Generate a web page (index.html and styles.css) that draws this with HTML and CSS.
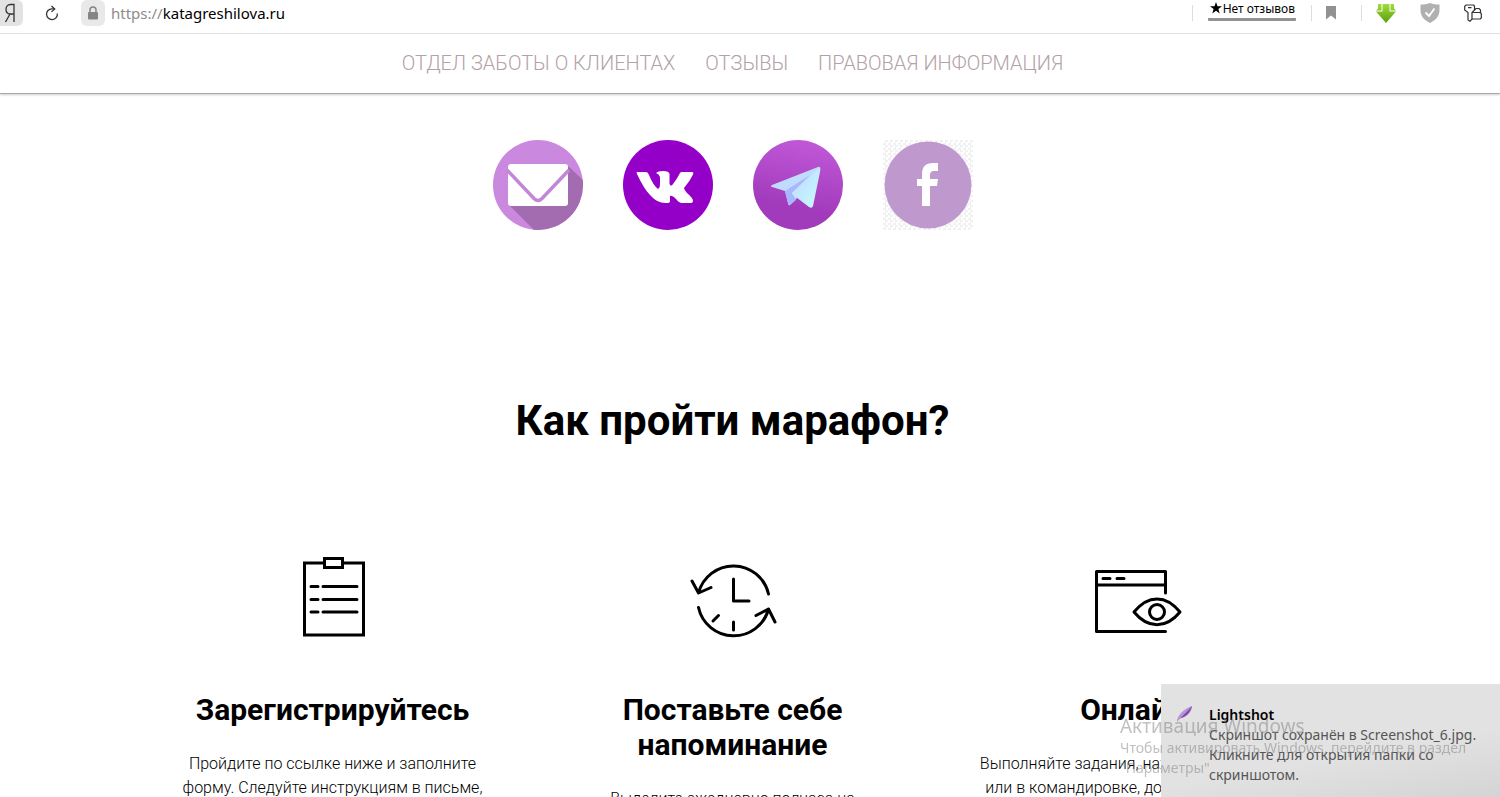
FILE: index.html
```html
<!DOCTYPE html>
<html lang="ru">
<head>
    <meta charset="UTF-8">
    <meta name="viewport" content="width=device-width, initial-scale=1.0">
    <title>katagreshilova.ru</title>
    <link rel="stylesheet" href="styles.css">
</head>
<body>
    <div class="toolbar">
        <button type="button" class="tool yandex" aria-label="Яндекс">
            <svg width="12" height="20" viewBox="0 0 12 20" fill="none" stroke="#333" stroke-width="1.3"><path d="M10 19V1.500H6.500C3.500 1.500 2 3.500 2 6.200S3.500 11 6.500 11H10M6 11L1.500 19"/></svg>
        </button>
        <button type="button" class="tool reload" aria-label="Обновить">
            <svg width="14" height="16" viewBox="0 0 14 16" fill="none" stroke="#333" stroke-width="1.3"><path d="M12.300 8.500A5.400 5.400 0 1 1 6.800 3.800H9.500"/><path d="M6.500 1L9.700 3.900L6.500 6.900"/></svg>
        </button>
        <button type="button" class="tool lock" aria-label="Защита">
            <svg width="12" height="14" viewBox="0 0 12 14"><rect x="1" y="6" width="10" height="7.500" rx="1" fill="#858585"/><path d="M3 7V4a3 3 0 0 1 6 0v3" fill="none" stroke="#858585" stroke-width="1.500"/></svg>
        </button>
        <button type="button" class="address"><span class="scheme">https://</span>katagreshilova.ru</button>
        <div class="tools-right">
            <div class="reviews-box">
                <button type="button" class="reviews"><svg width="12" height="12" viewBox="0 0 12 12"><path d="M6 0L7.500 4.200H12L8.400 6.900L9.700 11.500L6 8.700L2.300 11.500L3.600 6.900L0 4.200H4.500Z"/></svg>Нет отзывов</button>
            </div>
            <button type="button" class="tool bookmark" aria-label="Закладка">
                <svg width="10" height="14" viewBox="0 0 10 14"><path d="M0 0H10V13.500L5 9.500L0 13.500Z" fill="#929292"/></svg>
            </button>
            <button type="button" class="tool" aria-label="Загрузки">
                <svg width="20" height="20" viewBox="0 0 20 20">
                    <defs><linearGradient id="green" x2="0" y2="1"><stop offset="0" stop-color="#a4dc3c"/><stop offset="1" stop-color="#5b9e0c"/></linearGradient></defs>
                    <path d="M2 1H5.500V7.500H0L2 5.500ZM14.500 1H18V5.500L20 7.500H14.500ZM6.500 1H13.500V8.500H20L10 20L0 8.500H6.500Z" fill="url(#green)"/>
                </svg>
            </button>
            <button type="button" class="tool" aria-label="Protect">
                <svg width="20" height="20" viewBox="0 0 20 20"><path d="M10 0C13 1.500 16 1.500 19.500 1.500V7C19.500 13 16 17 10 20C4 17 .5 13 .5 7V1.500C4 1.500 7 1.500 10 0Z" fill="#b0b0b0"/><path d="M5.500 9.500L9 13L14.500 5.500" fill="none" stroke="#fff" stroke-width="1.800"/></svg>
            </button>
            <button type="button" class="tool" aria-label="Пароли">
                <svg width="18" height="18" viewBox="0 0 18 18" fill="none" stroke="#333" stroke-width="1.200"><path d="M2 1H9.500L10.500 2V6L8 8.500V15L6 17.300L4 16V8.500L.7 6V2.300Z"/><path d="M4 3.600H7.500M8 8.500H16L17.300 9.500V14L16.300 15H8M10.500 6L12 4.500H15L16.500 6V8.500"/></svg>
            </button>
        </div>
    </div>

    <div class="page">
        <nav class="menu">
            <a href="#">ОТДЕЛ ЗАБОТЫ О КЛИЕНТАХ</a>
            <a href="#">ОТЗЫВЫ</a>
            <a href="#">ПРАВОВАЯ ИНФОРМАЦИЯ</a>
        </nav>

        <div class="social">
            <a href="#" aria-label="Почта">
                <svg width="90" height="90" viewBox="0 0 90 90">
                    <defs><clipPath id="circle"><circle cx="45" cy="45" r="45"/></clipPath></defs>
                    <g clip-path="url(#circle)">
                        <rect width="90" height="90" fill="#ca88df"/>
                        <path d="M75 26L90 40V90H41L16 65Z" fill="#a46cb0"/>
                    </g>
                    <rect x="15" y="24" width="60" height="42" rx="3" fill="#fff"/>
                    <path d="M14 30L41 58.500Q45 62.500 49 58.500L76 30" fill="none" stroke="#c387d7" stroke-width="3.500"/>
                </svg>
            </a>
            <a href="#" aria-label="ВКонтакте">
                <svg width="90" height="90" viewBox="0 0 90 90">
                    <circle cx="45" cy="45" r="45" fill="#9500c9"/>
                    <path d="M14 32H23Q25 32 26 35Q30 45 35 49Q37 48 37 44V37Q36 34 33 33Q35 31 40 31Q46 31 46.500 34V44Q48 47 50 44Q54 39 57 33Q57.500 32 59 32H69Q71 32 70 34.500Q67 41 61 48Q61 50 64 53Q70 58 70 61Q70 63 67 63H59Q56 63 53 59Q49 55 47 56V61Q47 63 44 63Q35 64 27 55Q21 49 14 34Q13 32 14 32Z" fill="#fff"/>
                </svg>
            </a>
            <a href="#" aria-label="Telegram">
                <svg width="90" height="90" viewBox="0 0 90 90">
                    <defs>
                        <linearGradient id="violet" x1=".6" x2=".4" y2="1"><stop offset="0" stop-color="#c058d8"/><stop offset=".75" stop-color="#a23bbb"/></linearGradient>
                        <linearGradient id="wing" x2="1" y2="1"><stop offset="0" stop-color="#bdd9ff"/><stop offset="1" stop-color="#c9fbff"/></linearGradient>
                    </defs>
                    <circle cx="45" cy="45" r="45" fill="url(#violet)"/>
                    <path d="M19 45L65 27Q68 26 67 30L46 56L37 65Q35 66 35 63L32 51L19 47Q17 46 19 45Z" fill="#bfdcff"/>
                    <path d="M32 51L57 35L39 53L43 60L37 65Q35 66 35 63Z" fill="#a8b7fc"/>
                    <path d="M39 53L66 28Q68 28 67 32L60 66Q59 69 56 67L39 54Z" fill="url(#wing)"/>
                </svg>
            </a>
            <a href="#" aria-label="Facebook" class="facebook">
                <svg width="90" height="90" viewBox="0 0 90 90">
                    <circle cx="45" cy="45" r="43.500" fill="#bf98ce"/>
                    <path d="M39 66V46H34V39H39V34Q39 23 50 23H55V31H51Q47 31 47 35V39H55L54 46H47V66Z" fill="#fff"/>
                </svg>
            </a>
        </div>

        <h1>Как пройти марафон?</h1>

        <div class="steps">
            <div class="step">
                <svg width="100" height="100" viewBox="0 0 100 100" fill="none" stroke="#000" stroke-width="3">
                    <path d="M41 13H21.500V85H80.500V13H61"/><rect x="41.500" y="8.500" width="18" height="9"/>
                    <path d="M28 36.500H35M40 36.500H74M28 49.500H35M40 49.500H74M28 62H35M40 62H74" stroke-linecap="round"/>
                </svg>
                <h2>Зарегистрируйтесь</h2>
                <p>Пройдите по ссылке ниже и заполните форму. Следуйте инструкциям в письме, чтобы войти.</p>
            </div>
            <div class="step">
                <svg width="100" height="100" viewBox="0 0 100 100" fill="none" stroke="#000" stroke-width="3" stroke-linecap="round" stroke-linejoin="round">
                    <path d="M15.500 43A36 36 0 0 1 85.500 44M9 31L15.500 43L28 37.500M15.500 57.500A36 36 0 0 0 85.500 59M73 65.500L85.500 59L92 72"/>
                    <path d="M50.500 29V51H66M50.500 72V80M35.500 65.500L30 71"/>
                </svg>
                <h2>Поставьте себе напоминание</h2>
                <p>Выделите ежедневно полчаса на выполнение заданий.</p>
            </div>
            <div class="step">
                <svg width="100" height="100" viewBox="0 0 100 100" fill="none" stroke="#000" stroke-width="3" stroke-linecap="round" stroke-linejoin="round">
                    <path d="M82.500 43V21.500H13.500V81.500H82.500M13.500 35H82.500M20 28.500H27M34 28.500H41"/>
                    <path d="M51 62C65 44.500 83 44.500 97 62C83 79 65 79 51 62Z"/><circle cx="74" cy="62" r="7.500"/>
                </svg>
                <h2>Онлайн</h2>
                <p>Выполняйте задания, находясь в отпуске или в командировке, достаточно часа в день.</p>
            </div>
        </div>
    </div>

    <div class="notice">
        <svg width="18" height="18" viewBox="0 0 18 18"><path d="M1 17C1 10 8 4 16 1C16 7 11 12 4 13.500Z" fill="#b993d8"/><path d="M1 17C6 11 11 7 16 1C14 9 9 12 4 13.500Z" fill="#7c4da3"/></svg>
        <div>
            <strong>Lightshot</strong>
            <p>Скриншот сохранён в Screenshot_6.jpg. Кликните для открытия папки со скриншотом.</p>
        </div>
    </div>

    <div class="activation">
        <div class="activation-title">Активация Windows</div>
        <p>Чтобы активировать Windows, перейдите в раздел "Параметры"</p>
    </div>
</body>
</html>
```
FILE: styles.css
```css
* {
    box-sizing: border-box;
}
body {
    margin: 0;
    height: 100vh;
    overflow: hidden;
    background: #fff;
    color: #000;
    font-family: Roboto, sans-serif;
}
button {
    display: flex;
    align-items: center;
    justify-content: center;
    padding: 0;
    border: none;
    background: none;
    cursor: pointer;
}
svg {
    display: block;
    flex-shrink: 0;
}

/* browser bar */
.toolbar {
    display: flex;
    align-items: flex-start;
    height: 34px;
    border-bottom: 1px solid #e2e2e2;
    font-family: "Noto Sans", sans-serif;
}
.tool {
    height: 26px;
}
.yandex {
    width: 23px;
    padding-right: 4px;
    background: #e3e3e3;
    border-radius: 0 6px 6px 0;
}
.reload {
    width: 58px;
}
.lock {
    width: 24px;
    background: #e9e9e9;
    border-radius: 6px;
}
.address {
    height: 26px;
    margin-left: 6px;
    font: 15px "Noto Sans", sans-serif;
    color: #000;
}
.scheme {
    color: #8c8c8c;
}
.tools-right {
    display: flex;
    gap: 24px;
    margin-left: auto;
    padding-right: 18px;
}
.reviews-box {
    height: 21px;
    margin-right: -10px;
    padding: 0 16px;
    background: linear-gradient(#ddd, #ddd) 0 5px / 1px 16px no-repeat, linear-gradient(#ddd, #ddd) 100% 5px / 1px 16px no-repeat;
}
.reviews {
    gap: 1px;
    height: 21px;
    padding: 0 1px 2px 2px;
    border-bottom: 3px solid #929292;
    border-radius: 1px;
    font: 12px "Noto Sans", sans-serif;
    color: #000;
}
.bookmark {
    padding-right: 26px;
    margin-right: -10px;
    background: linear-gradient(#ddd, #ddd) 100% 5px / 1px 16px no-repeat;
}

/* site */
.page {
    text-align: center;
}
.menu {
    display: flex;
    justify-content: center;
    gap: 30px;
    height: 60px;
    padding-right: 35px;
    line-height: 58px;
    border-bottom: 1px solid #aaa;
    box-shadow: 0 1px 2px #ccc;
}
.menu a {
    color: #b3a1a8;
    font-size: 20px;
    font-weight: 300;
    text-decoration: none;
}
.social {
    display: flex;
    justify-content: center;
    gap: 40px;
    padding: 46px 35px 0 0;
}
.facebook {
    background: repeating-conic-gradient(#f1f1f1 0 25%, #fff 0 50%) 0 0 / 5px 5px;
}
h1 {
    margin: 166px 0 104px;
    padding-right: 35px;
    font-size: 42px;
    line-height: 50px;
}
.steps {
    display: grid;
    grid-template-columns: repeat(3, 310px);
    justify-content: center;
    gap: 90px;
    padding-right: 35px;
}
.step svg {
    margin: 0 auto;
}
.step h2 {
    margin: 42px 0 25px;
    font-size: 30px;
    line-height: 35px;
}
.step p {
    margin: 0;
    font-size: 16px;
    line-height: 24px;
    font-weight: 300;
}

/* desktop messages */
.notice {
    position: fixed;
    right: 0;
    bottom: 0;
    display: flex;
    gap: 15px;
    width: 339px;
    height: 113px;
    padding: 21px 8px 0 15px;
    background: linear-gradient(170deg, #e2e2e2 60%, #d4d4d4);
    font: 14px/20px "Noto Sans", sans-serif;
    color: #555;
}
.notice strong {
    display: block;
    font-weight: 600;
    color: #000;
}
.notice p {
    margin: 0;
}
.activation {
    position: fixed;
    right: 20px;
    bottom: 19px;
    width: 360px;
    font: 14px/20px "Noto Sans", sans-serif;
    color: rgba(130, 130, 130, 0.5);
}
.activation-title {
    font-size: 19px;
    line-height: 24px;
}
.activation p {
    margin: 0;
}
```
